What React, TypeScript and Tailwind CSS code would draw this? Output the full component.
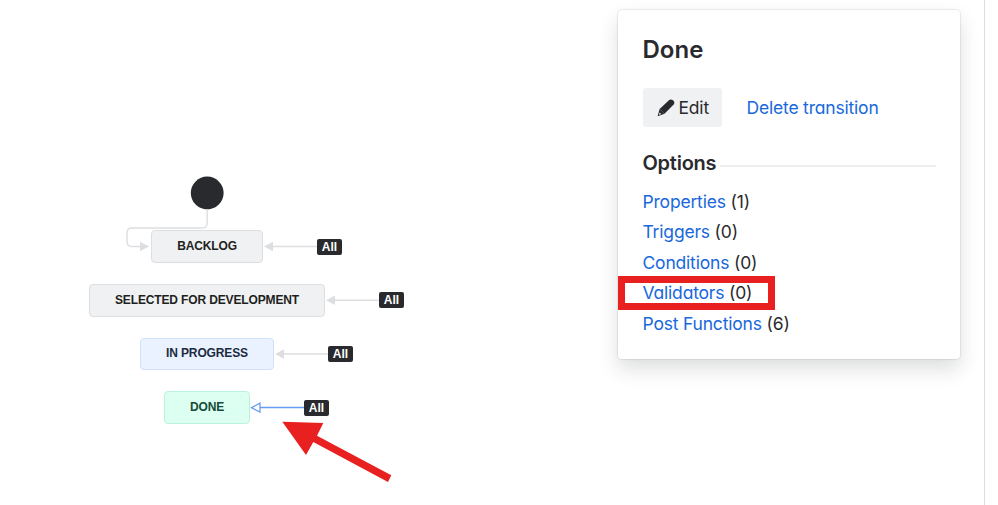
import clsx from 'clsx'

const statuses = [
  {
    name: 'BACKLOG',
    box: 'left-[151px] top-[230px] w-[112px] h-[33px] bg-[#f0f1f2] border-[#dddee1] text-[#1e1f21]',
    badge: 'left-[317px] top-[239px]',
  },
  {
    name: 'SELECTED FOR DEVELOPMENT',
    box: 'left-[89px] top-[284px] w-[236px] h-[33px] bg-[#f0f1f2] border-[#dddee1] text-[#1e1f21]',
    badge: 'left-[379px] top-[292px]',
  },
  {
    name: 'IN PROGRESS',
    box: 'left-[140px] top-[338px] w-[134px] h-[32px] bg-[#e9f2fe] border-[#cfe1fd] text-[#1c2b42]',
    badge: 'left-[328px] top-[346px]',
  },
  {
    name: 'DONE',
    box: 'left-[164px] top-[391px] w-[86px] h-[33px] bg-[#dcfff1] border-[#baf3db] text-[#164b35]',
    badge: 'left-[304px] top-[400px]',
  },
]

const options = [
  { label: 'Properties', count: 1 },
  { label: 'Triggers', count: 0 },
  { label: 'Conditions', count: 0 },
  { label: 'Validators', count: 0, highlighted: true },
  { label: 'Post Functions', count: 6 },
]

function Connectors() {
  return (
    <svg className="absolute inset-0" width="618" height="505" fill="none">
      <circle cx="207.2" cy="193" r="16.4" fill="#292a2e" />
      <g stroke="#dddee1" strokeWidth="1.4">
        <path d="M207.2 209v14q0 5-5 5H132q-5 0-5 5v8.500q0 5 5 5h9" />
        <path d="M272 246.500h46M334 300.300h46M283 354h46" />
      </g>
      <g fill="#dddee1">
        <path d="M140 241.800v9.400l9-4.700z" />
        <path d="M273 241.800v9.400l-9-4.700z" />
        <path d="M335 295.600v9.400l-9-4.700z" />
        <path d="M284 349.300v9.400l-9-4.700z" />
      </g>
      <g stroke="#669df1" strokeWidth="1.3">
        <path d="M260 407.500h45" />
        <path d="M260 403.200v9l-8.500-4.500z" fill="#fff" />
      </g>
    </svg>
  )
}

function WorkflowDiagram() {
  return (
    <div className="relative w-[618px] shrink-0 font-['Liberation_Sans',Arial,sans-serif]">
      <Connectors />
      {statuses.map((s) => (
        <div key={s.name}>
          <div
            className={clsx(
              'absolute flex items-center justify-center rounded-[4px] border pb-[2px] text-[12px] leading-none font-bold tracking-[-0.14px] whitespace-nowrap',
              s.box
            )}
          >
            {s.name}
          </div>
          <div
            className={clsx(
              'absolute flex h-[16px] w-[25px] items-center justify-center rounded-[2px] bg-[#292a2e] text-[12px] leading-none font-bold text-white',
              s.badge
            )}
          >
            All
          </div>
        </div>
      ))}
      {/* Pointer to the selected transition */}
      <svg className="absolute inset-0" width="618" height="505">
        <path
          d="M282.300 421.700L323.300 423L317 435.700L391.300 475.300L388 482L313.300 442L306 455z"
          fill="#e8201f"
        />
      </svg>
    </div>
  )
}

function TransitionPanel() {
  return (
    <div className="mt-[10px] h-[349px] w-[342px] shrink-0 rounded-[4px] bg-white px-[24.500px] text-[17.500px] tracking-[-0.19px] text-[#292a2e] shadow-[0_0_1px_1px_#1e1f2114,0_10px_20px_#1e1f2126]">
      <h2 className="pt-[25px] text-[24px] leading-[30px] font-semibold tracking-normal">Done</h2>

      <div className="mt-[23px] flex items-center">
        <button className="flex h-[39px] w-[79px] items-center rounded-[3px] bg-[#f0f1f2] pl-[14px]">
          <svg className="mr-[4px]" width="18" height="18" viewBox="0 0 18 18" fill="#292a2e">
            <path d="M10.600 2.400L12.200 1Q14.200 -0.300 16.200 1.600T16.700 5.600L7.500 14.700L2.600 9.900z" />
            <path d="M2.600 9.900L7.500 14.700L0.600 17.200z" />
            <path d="M2.600 13.400L4.300 15L1.900 15.900z" fill="#f0f1f2" />
          </svg>
          <span className="pt-[1px]">Edit</span>
        </button>
        <a className="ml-[25px] pt-[1px] whitespace-nowrap text-[#1868db]">Delete transition</a>
      </div>

      <div className="mt-[22px] flex items-center">
        <h3 className="text-[20px] leading-[28px] font-semibold tracking-[-0.25px]">Options</h3>
        <div className="mt-[6px] ml-[4px] h-[2px] flex-1 bg-[#eeeef0]" />
      </div>

      <ul className="mt-[9.500px]">
        {options.map((o) => (
          <li key={o.label} className="relative h-[30.500px] leading-[30px] whitespace-nowrap">
            <a className="text-[#1868db]">{o.label}</a> ({o.count})
            {o.highlighted && (
              <div className="absolute top-[-2.500px] left-[-24.500px] h-[34px] w-[157px] border-[7px] border-[#e8201f]" />
            )}
          </li>
        ))}
      </ul>
    </div>
  )
}

export default function App() {
  return (
    <div className="h-[505px] w-[998px] overflow-hidden bg-white font-[Inter,sans-serif] [font-feature-settings:'cv11']">
      <div className="flex h-full w-[985px] items-start border-r border-[#dddee1]">
        <WorkflowDiagram />
        <TransitionPanel />
      </div>
    </div>
  )
}
